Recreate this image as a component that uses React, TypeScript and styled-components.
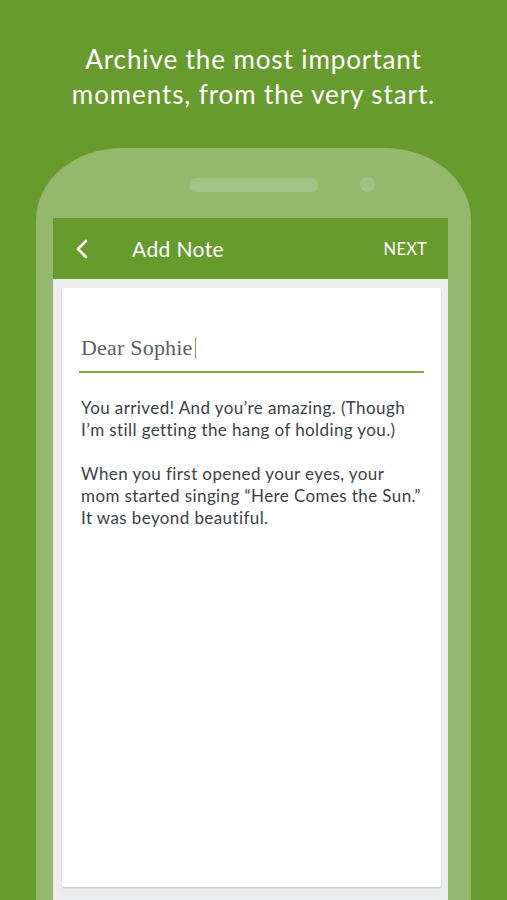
import styled, { createGlobalStyle } from 'styled-components';

const GlobalStyle = createGlobalStyle`
   html, body {
      margin: 0;
      padding: 0;
      background: #679b2e;
   }
`;

function App() {
   return (
      <>
         <GlobalStyle />
         <Page>
            <Headline>
               Archive the most important
               <br />
               moments, from the very start.
            </Headline>
            <Phone>
               <EarRow>
                  <Speaker />
                  <Camera />
               </EarRow>
               <Screen>
                  <AppBar>
                     <BackButton aria-label="back">
                        <svg width="14" height="20" viewBox="0 0 14 20">
                           <path d="M11 2 L3 10 L11 18" fill="none" stroke="#fff" strokeWidth="2.6" strokeLinecap="round" strokeLinejoin="round" />
                        </svg>
                     </BackButton>
                     <Title>Add Note</Title>
                     <NextButton>NEXT</NextButton>
                  </AppBar>
                  <Body>
                     <Card>
                        <TitleField>
                           <TitleText>Dear Sophie</TitleText>
                           <Caret />
                        </TitleField>
                        <NoteText>
                           You arrived! And you’re amazing. (Though I’m still getting the hang of holding you.)
                        </NoteText>
                        <NoteText>
                           When you first opened your eyes, your mom started singing “Here Comes the Sun.” It was beyond beautiful.
                        </NoteText>
                     </Card>
                  </Body>
               </Screen>
            </Phone>
         </Page>
      </>
   );
}

export default App;

const Page = styled.div`
   height: 900px;
   overflow: hidden;
   background: #679b2e;
   display: flex;
   flex-direction: column;
   font-family: Lato, 'Open Sans', sans-serif;
`;
const Headline = styled.h1`
   margin: 0;
   padding-top: 42px;
   text-align: center;
   color: #fff;
   font-weight: 400;
   font-size: 26px;
   line-height: 35px;
   letter-spacing: 0.9px;
`;
const Phone = styled.div`
   margin: 36px 36px 0 36px;
   flex: 1;
   background: #94b86c;
   border-radius: 86px 86px 0 0 / 72px 72px 0 0;
   padding: 29px 23px 0 17px;
   display: flex;
   flex-direction: column;
`;
const EarRow = styled.div`
   display: grid;
   grid-template-columns: 1fr auto 1fr;
   align-items: center;
   height: 14px;
   margin-bottom: 27px;
   padding-left: 6px;
`;
const Speaker = styled.div`
   grid-column: 2;
   width: 129px;
   height: 14px;
   border-radius: 7px;
   background: #a3c386;
`;
const Camera = styled.div`
   grid-column: 3;
   width: 15px;
   height: 15px;
   margin-left: 42px;
   border-radius: 50%;
   background: #a3c386;
`;
const Screen = styled.div`
   flex: 1;
   background: #ecedef;
   display: flex;
   flex-direction: column;
`;
const AppBar = styled.div`
   height: 61px;
   background: #679b2e;
   display: flex;
   align-items: center;
   padding: 0 21px 0 22px;
   color: #fff;
`;
const BackButton = styled.div`
   display: flex;
   align-items: center;
   width: 14px;
   margin-right: 43px;
`;
const Title = styled.div`
   flex: 1;
   font-size: 21px;
   letter-spacing: 0.4px;
`;
const NextButton = styled.div`
   font-size: 16.5px;
   letter-spacing: 0.2px;
`;
const Body = styled.div`
   flex: 1;
   padding: 9px 7px 13px 9px;
   display: flex;
   flex-direction: column;
`;
const Card = styled.div`
   flex: 1;
   background: #fff;
   border-radius: 2px;
   box-shadow: 0 1px 2px rgba(0, 0, 0, 0.18);
   padding: 46px 17px 0 17px;
`;
const TitleField = styled.div`
   display: flex;
   align-items: center;
   padding: 0 0 9px 2px;
   border-bottom: 2px solid #7aab48;
   margin-bottom: 24px;
`;
const TitleText = styled.span`
   font-family: 'Liberation Serif', serif;
   font-size: 22px;
   color: #5b6066;
   line-height: 28px;
   letter-spacing: 0.2px;
`;
const Caret = styled.span`
   width: 1px;
   height: 22px;
   margin-left: 2px;
   background: #7aab48;
`;
const NoteText = styled.p`
   margin: 0 0 22px 2px;
   font-size: 17px;
   line-height: 22px;
   color: #3b4147;
   letter-spacing: 0.4px;
`;
